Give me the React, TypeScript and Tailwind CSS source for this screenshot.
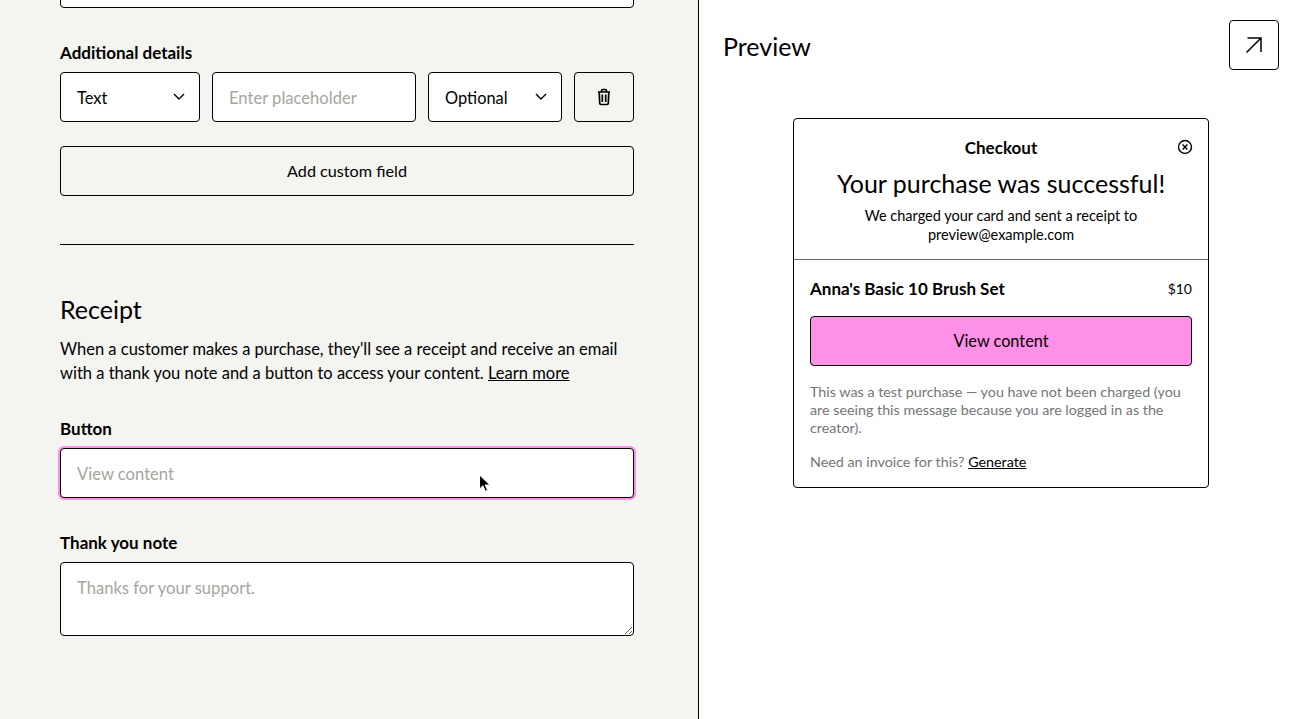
import React from 'react';

const Chevron = () => (
    <svg className="pointer-events-none absolute right-[14px] top-[18px]" width="14" height="14" viewBox="0 0 14 14" fill="none" stroke="#000" strokeWidth="1.4">
        <path d="M2 4 7 9 12 4" />
    </svg>
);

const Trash = () => (
    <svg width="16" height="18" viewBox="0 0 16 18" fill="none" stroke="#000" strokeWidth="1.7">
        <path d="M2 4h12M3.2 4l.5 11.2c0 .9.7 1.3 1.4 1.3h5.8c.7 0 1.4-.4 1.4-1.3L12.8 4M5.5 4V2.8c0-.8.5-1.3 1.3-1.3h2.4c.8 0 1.3.5 1.3 1.3V4" />
        <path d="M6.3 6.5v7.5M9.7 6.5v7.5" />
    </svg>
);

const SelectBox: React.FC<{ value: string; width: string }> = ({ value, width }) => (
    <div className={`relative shrink-0 ${width}`}>
        <select defaultValue={value} className="h-[50px] w-full appearance-none rounded border border-black bg-white pt-[3px] pl-4 pr-8 text-[16.4px] text-black outline-none">
            <option>{value}</option>
        </select>
        <Chevron />
    </div>
);

const inputClass = 'h-[50px] w-full rounded border border-black bg-white px-4 pt-[1px] text-[16.6px] outline-none placeholder:text-[#a8a5a0]';

export default function App() {
    return (
        <div className="flex h-[719px] w-[1295px] overflow-hidden bg-white text-black font-['Lato',sans-serif]">
            {/* form column */}
            <div className="w-[699px] shrink-0 overflow-hidden border-r border-black bg-[#f4f4f0] pl-[60px] pr-[64px]">
                <div className="-mt-[42px] h-[50px] rounded border border-black bg-white" />

                <div className="mt-[36px] text-[17px] leading-[18px] font-bold">Additional details</div>
                <div className="mt-[10px] flex gap-3">
                    <SelectBox value="Text" width="w-[140px]" />
                    <input className={inputClass} placeholder="Enter placeholder" />
                    <SelectBox value="Optional" width="w-[134px]" />
                    <button className="flex h-[50px] w-[60px] shrink-0 items-center justify-center rounded border border-black">
                        <Trash />
                    </button>
                </div>
                <button className="mt-6 h-[50px] w-full rounded border border-black pt-[1px] text-[16.2px]">Add custom field</button>
                <div className="mt-12 h-px bg-black" />

                <h2 className="mt-[49px] text-[25px] leading-[30px]">Receipt</h2>
                <p className="mt-[13px] text-[16.5px] leading-6">
                    When a customer makes a purchase, they'll see a receipt and receive an email with a thank you note and a button to access your content. <a className="underline">Learn more</a>
                </p>

                <div className="mt-[35px] text-[17px] leading-[18px] font-bold">Button</div>
                <div className="relative mt-[10px]">
                    <input className={`${inputClass} shadow-[0_0_0_2px_#ff90e8]`} placeholder="View content" />
                    <svg className="pointer-events-none absolute left-[418px] top-[26px]" width="13" height="19" viewBox="0 0 13 19">
                        <path d="M1.5 1v14l3.4-3.2 2.5 5.4 2.2-1-2.4-5.2H12z" fill="#000" stroke="#fff" strokeWidth="1" />
                    </svg>
                </div>

                <div className="mt-[36px] text-[17px] leading-[18px] font-bold">Thank you note</div>
                <textarea className="mt-[10px] block h-[74px] w-full rounded border border-black bg-white px-4 pt-[13px] pb-3 text-[16.6px] outline-none placeholder:text-[#a8a5a0]" placeholder="Thanks for your support." />
            </div>

            {/* preview column */}
            <div className="flex-1 pl-6 pr-4">
                <div className="flex items-start justify-between pt-5">
                    <h2 className="mt-[11px] text-[25px] leading-[30px]">Preview</h2>
                    <button className="flex size-[50px] items-center justify-center rounded border border-black">
                        <svg width="18" height="18" viewBox="0 0 18 18" fill="none" stroke="#000" strokeWidth="1.5">
                            <path d="M1.5 16.5 16 2M2.5 2H16v14" />
                        </svg>
                    </button>
                </div>

                <div className="mt-[48px] ml-[70px] w-[416px] rounded border border-black">
                    <div className="border-b border-[#6e6e6e] px-4 pt-[17px] pb-[15px] text-center">
                        <div className="relative">
                            <div className="text-[17px] leading-6 font-bold">Checkout</div>
                            <svg className="absolute -right-[1px] top-[3px]" width="16" height="16" viewBox="0 0 16 16" fill="none" stroke="#000" strokeWidth="1.4">
                                <circle cx="8" cy="8" r="6.5" />
                                <path d="M5.6 5.6l4.8 4.8M10.4 5.6l-4.8 4.8" />
                            </svg>
                        </div>
                        <div className="mt-[8px] text-[25px] leading-[30px]">Your purchase was successful!</div>
                        <div className="mt-[8px] text-[14.5px] leading-[19px]">
                            We charged your card and sent a receipt to<br />preview@example.com
                        </div>
                    </div>
                    <div className="px-4 pt-[17px] pb-4">
                        <div className="flex items-center justify-between">
                            <span className="text-[17px] leading-6 font-bold">Anna's Basic 10 Brush Set</span>
                            <span className="pb-[2px] text-[14px]">$10</span>
                        </div>
                        <button className="mt-[15px] h-[50px] w-full rounded border border-black bg-[#ff90e8] pt-[1px] text-[16.3px]">View content</button>
                        <p className="mt-[17px] text-[14.3px] leading-[18px] text-[#757575]">
                            This was a test purchase — you have not been charged (you are seeing this message because you are logged in as the creator).
                        </p>
                        <p className="mt-[16px] text-[14.3px] leading-[18px] text-[#757575]">
                            Need an invoice for this? <a className="text-black underline">Generate</a>
                        </p>
                    </div>
                </div>
            </div>
        </div>
    );
}
